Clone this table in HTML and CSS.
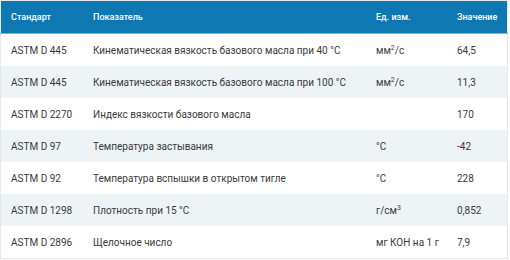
FILE: index.html
```html
<!DOCTYPE html>
<html lang="ru">
<head>
<meta charset="utf-8">
<link rel="stylesheet" href="styles.css">
</head>
<body>
<table class="spec">
  <thead>
    <tr>
      <th class="c1">Стандарт</th>
      <th class="c2">Показатель</th>
      <th class="c3">Ед. изм.</th>
      <th class="c4">Значение</th>
    </tr>
  </thead>
  <tbody>
    <tr><td>ASTM D 445</td><td>Кинематическая вязкость базового масла при 40 °C</td><td>мм<sup>2</sup>/с</td><td>64,5</td></tr>
    <tr><td>ASTM D 445</td><td>Кинематическая вязкость базового масла при 100 °C</td><td>мм<sup>2</sup>/с</td><td>11,3</td></tr>
    <tr><td>ASTM D 2270</td><td>Индекс вязкости базового масла</td><td></td><td>170</td></tr>
    <tr><td>ASTM D 97</td><td>Температура застывания</td><td>°C</td><td>-42</td></tr>
    <tr><td>ASTM D 92</td><td>Температура вспышки в открытом тигле</td><td>°C</td><td>228</td></tr>
    <tr><td>ASTM D 1298</td><td>Плотность при 15 °C</td><td>г/см<sup>3</sup></td><td>0,852</td></tr>
    <tr><td>ASTM D 2896</td><td>Щелочное число</td><td>мг КОН на 1 г</td><td>7,9</td></tr>
  </tbody>
</table>
</body>
</html>
```
FILE: styles.css
```css
html, body {
  margin: 0;
  padding: 0;
  background: #ffffff;
}
body {
  font-family: Roboto, "Liberation Sans", Arial, sans-serif;
  font-size: 10px;
  color: #3a3a3a;
}
.spec {
  width: 508px;
  border-collapse: collapse;
  border: 1px solid #e4e8eb;
  table-layout: fixed;
}
.spec th {
  background: #0f78b3;
  color: #ffffff;
  font-weight: 500;
  font-size: 9px;
  text-align: left;
  height: 32px;
  padding: 0 0 0 10px;
  border-bottom: 1px solid #7fb3d3;
}
.spec td {
  height: 32px;
  padding: 0 0 0 10px;
  text-align: left;
  white-space: nowrap;
}
.spec tbody tr:nth-child(even) td {
  background: #eef3f6;
}
.c1 { width: 72px; }
.c2 { width: 273px; }
.c3 { width: 71px; }
.c4 { width: auto; }
sup {
  font-size: 7px;
  line-height: 0;
  vertical-align: 4px;
}
```
